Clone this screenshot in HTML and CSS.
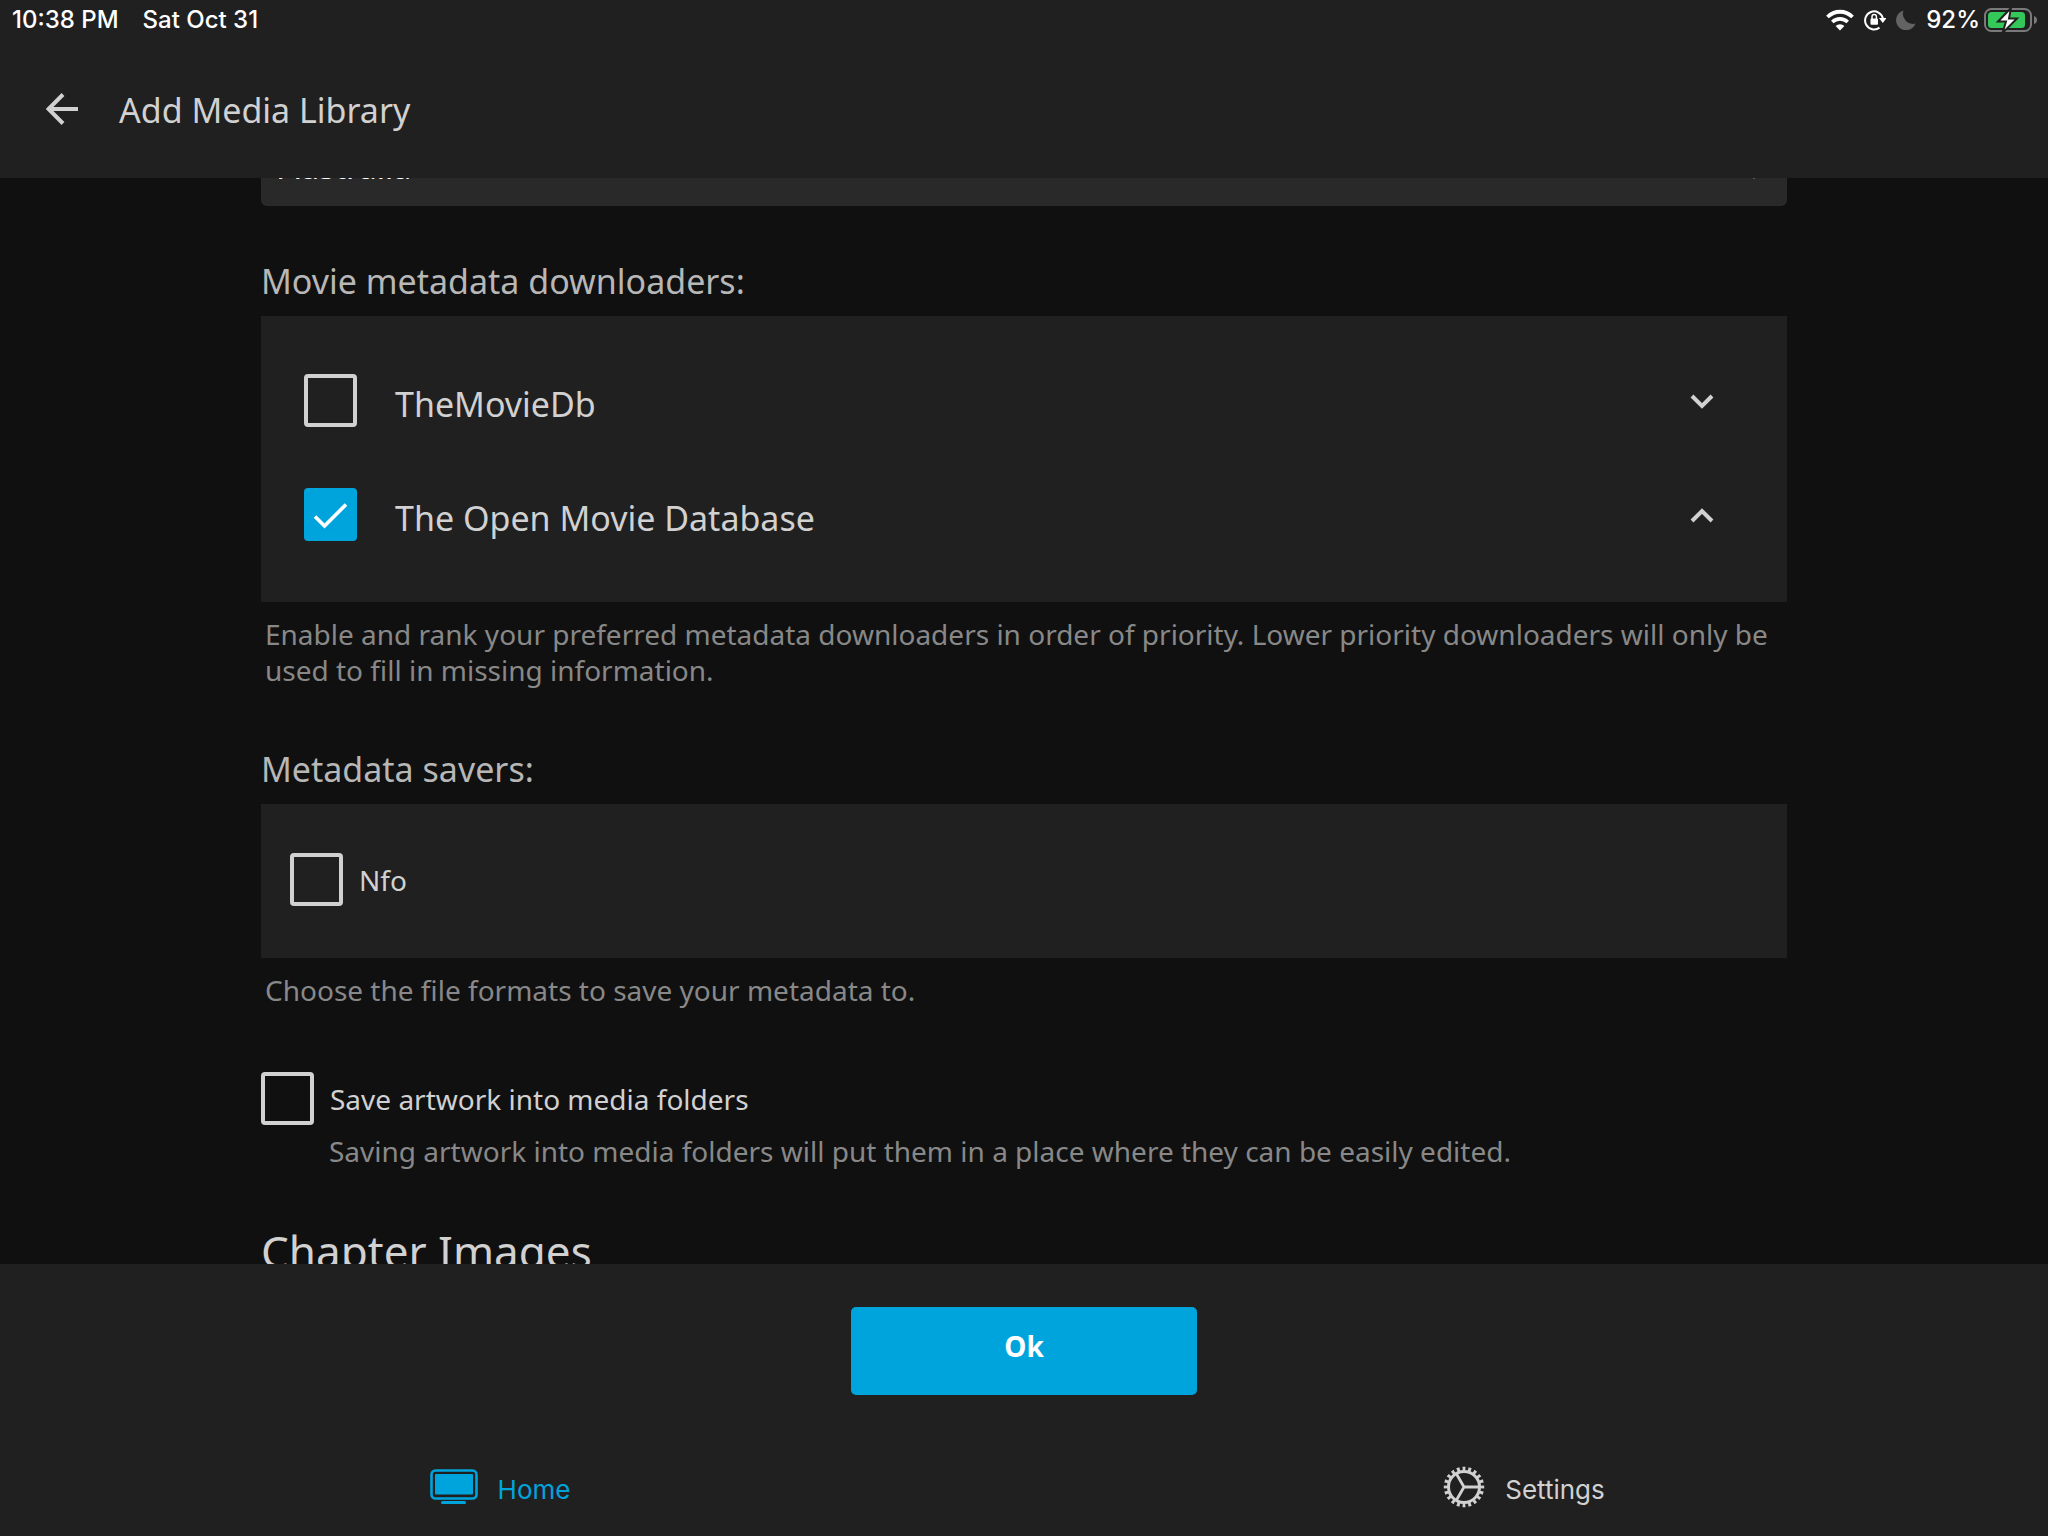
FILE: index.html
```html
<!DOCTYPE html>
<html lang="en">
<head>
<meta charset="utf-8">
<meta name="viewport" content="width=device-width, initial-scale=1">
<title>Add Media Library</title>
<link rel="stylesheet" href="styles.css">
</head>
<body>
<div class="app">
  <header class="top">
    <div class="status">
      <span>10:38 PM</span>
      <span>Sat Oct 31</span>
      <div class="status-icons">
        <svg width="28" height="22" viewBox="0 0 28 22" aria-label="Wi-Fi">
          <path d="M1.500 8A17.500 17.500 0 0 1 26.500 8" fill="none" stroke="#fff" stroke-width="3.800"/>
          <path d="M6.300 13A11 11 0 0 1 21.700 13" fill="none" stroke="#fff" stroke-width="3.600"/>
          <path d="M14 21.500l-4.400-4.500a6.300 6.300 0 0 1 8.800 0z" fill="#fff"/>
        </svg>
        <svg width="22" height="22" viewBox="0 0 22 22" aria-label="Rotation lock">
          <path d="M15.500 18.600A9 9 0 1 1 18.900 9.500" fill="none" stroke="#fff" stroke-width="2"/>
          <path d="M15 9h7.500l-3.700 5z" fill="#fff"/>
          <rect x="6.500" y="9.500" width="7.500" height="6.200" rx="1" fill="#fff"/>
          <path d="M8 10V7.800a2.200 2.200 0 0 1 4.400 0V10" fill="none" stroke="#fff" stroke-width="1.500"/>
        </svg>
        <svg width="20" height="20" viewBox="0 0 20 20" aria-label="Do not disturb">
          <path d="M7.500 0.500A10 10 0 1 0 19.500 13.500A10 10 0 0 1 7.500 0.500z" fill="#636363"/>
        </svg>
        <span>92%</span>
        <svg class="battery" width="54" height="26" viewBox="0 0 54 26" aria-label="Charging">
          <rect x="1" y="2" width="46" height="22" rx="6.500" fill="none" stroke="#7a7a7a" stroke-width="2"/>
          <path d="M50 9q3 1 3 4t-3 4z" fill="#7a7a7a"/>
          <rect x="4" y="5" width="37" height="16" rx="3.500" fill="#34c759"/>
          <path d="M27 1L14 14.500h8L18.500 26L33 11.500h-8z" fill="#fff" stroke="#202020" stroke-width="2"/>
        </svg>
      </div>
    </div>
    <div class="titlebar">
      <button class="icon-button" type="button" aria-label="Back">
        <svg width="32" height="32" viewBox="0 0 32 32"><path d="M32 16H3M17 1.500L2.500 16L17 30.500" fill="none" stroke="#d1d1d1" stroke-width="4"/></svg>
      </button>
      <h1>Add Media Library</h1>
    </div>
  </header>

  <main class="scroller">
    <form class="form" id="library">
      <div class="select-wrap">
        <select class="select" aria-label="Country">
          <option>Australia</option>
        </select>
        <svg class="select-arrow" width="24" height="16" viewBox="0 0 24 16"><path d="M2 2L12 12L22 2" fill="none" stroke="#d1d1d1" stroke-width="4"/></svg>
      </div>

      <section class="group">
        <h2>Movie metadata downloaders:</h2>
        <div class="panel ranked">
          <div class="rank-row">
            <label class="check"><input type="checkbox"><span>TheMovieDb</span></label>
            <button class="icon-button" type="button" aria-label="Move down">
              <svg width="24" height="18" viewBox="0 0 24 18"><path d="M2 5L12 15L22 5" fill="none" stroke="#d1d1d1" stroke-width="4"/></svg>
            </button>
          </div>
          <div class="rank-row">
            <label class="check"><input type="checkbox" checked><span>The Open Movie Database</span></label>
            <button class="icon-button" type="button" aria-label="Move up">
              <svg width="24" height="18" viewBox="0 0 24 18"><path d="M2 16L12 6L22 16" fill="none" stroke="#d1d1d1" stroke-width="4"/></svg>
            </button>
          </div>
        </div>
        <p class="help">Enable and rank your preferred metadata downloaders in order of priority. Lower priority downloaders will only be used to fill in missing information.</p>
      </section>

      <section class="group">
        <h2>Metadata savers:</h2>
        <div class="panel savers">
          <label class="check"><input type="checkbox"><span>Nfo</span></label>
        </div>
        <p class="help">Choose the file formats to save your metadata to.</p>
      </section>

      <section class="artwork">
        <label class="check"><input type="checkbox" aria-describedby="artwork-help"><span>Save artwork into media folders</span></label>
        <p class="help" id="artwork-help">Saving artwork into media folders will put them in a place where they can be easily edited.</p>
      </section>

      <h2 class="section-title">Chapter Images</h2>
    </form>
  </main>

  <footer class="bottom">
    <button class="submit" type="submit" form="library">Ok</button>
    <nav class="tabs">
      <a class="tab active" href="#home">
        <svg width="48" height="36" viewBox="0 0 48 36"><rect x="1.500" y="1.500" width="45" height="28" rx="4" fill="none" stroke="currentColor" stroke-width="2.600"/><rect x="5" y="5" width="38" height="20.500" rx="1" fill="currentColor"/><rect x="11" y="32" width="25" height="3" rx="1.500" fill="currentColor"/></svg>
        <span>Home</span>
      </a>
      <a class="tab" href="#settings">
        <svg width="42" height="42" viewBox="0 0 42 42" fill="none" stroke="currentColor">
          <circle cx="21" cy="21" r="15.500" stroke-width="3"/>
          <circle cx="21" cy="21" r="18.200" stroke-width="4" pathLength="40" stroke-dasharray="1 1" stroke-dashoffset="0.500"/>
          <path d="M21 21H36M21 21L13.500 8M21 21L13.500 34" stroke-width="2.800"/>
        </svg>
        <span>Settings</span>
      </a>
    </nav>
  </footer>
</div>
</body>
</html>
```
FILE: styles.css
```css
* { box-sizing: border-box; }

body {
  margin: 0;
  background: #101010;
  color: #d1d1d1;
  font-family: "Noto Sans", sans-serif;
}

h1, h2, p { margin: 0; font-weight: 400; }

.app {
  display: flex;
  flex-direction: column;
  height: 100vh;
}

.top, .bottom {
  flex: none;
  background: #202020;
}

.status {
  display: flex;
  align-items: center;
  gap: 24px;
  height: 40px;
  padding: 0 10px 0 12px;
  color: #fff;
  font: 500 24px/40px Inter, sans-serif;
}

.status-icons {
  display: flex;
  align-items: center;
  gap: 10px;
  margin-left: auto;
}

.battery { margin-left: -6px; }

.titlebar {
  display: flex;
  align-items: center;
  gap: 41px;
  height: 138px;
  padding: 0 46px;
}

h1, h2 { font-size: 34px; line-height: 46px; }

h1 { padding-top: 2px; }

.icon-button {
  display: flex;
  padding: 0;
  border: 0;
  background: none;
}

.scroller {
  flex: 1;
  min-height: 0;
  overflow: hidden;
}

/* The form is scrolled past its first fields. */
.form {
  margin-top: -52px;
  padding: 0 261px;
}

.select-wrap { position: relative; }

.select {
  display: block;
  width: 100%;
  height: 80px;
  padding: 2px 18px 0;
  appearance: none;
  border: 0;
  border-radius: 6px;
  background: #292929;
  color: #fff;
  font: 32px/46px "Noto Sans", sans-serif;
}

.select-arrow {
  position: absolute;
  top: 38px;
  right: 21px;
}

.group { margin-top: 52px; }
.group + .group { margin-top: 58px; }
.group h2 { color: #b7b7b7; }

.panel {
  margin: 12px 0 14px;
  background: #202020;
}

.ranked { padding: 27px 73px 31px 43px; }

.rank-row {
  display: flex;
  align-items: center;
  justify-content: space-between;
  height: 114px;
}

.rank-row .check { gap: 38px; font-size: 34px; }
.rank-row span { padding-top: 8px; }

.savers { padding: 49px 29px 52px; }

.check {
  display: flex;
  align-items: center;
  gap: 16px;
  font-size: 28px;
  line-height: 36px;
}

.check input {
  flex: none;
  width: 53px;
  height: 53px;
  margin: 0;
  appearance: none;
  border: 4px solid #d1d1d1;
  border-radius: 4px;
}

.check input:checked {
  border-color: #00a4dc;
  background: #00a4dc url("data:image/svg+xml,%3Csvg xmlns='http://www.w3.org/2000/svg' viewBox='0 0 53 53'%3E%3Cpath d='M11 28.500L20.500 38L42 16.500' fill='none' stroke='%23fff' stroke-width='3.600'/%3E%3C/svg%3E") center / 53px 53px no-repeat;
}

.help {
  padding: 0 4px;
  color: #888;
  font-size: 28px;
  line-height: 36px;
}

.artwork { margin-top: 64px; }
.artwork .help { padding: 8px 0 0 68px; }

.section-title {
  margin-top: 52px;
  font-size: 44px;
  line-height: 60px;
}

.bottom { padding-top: 43px; }

.submit {
  display: block;
  width: 346px;
  height: 88px;
  margin: 0 auto;
  padding: 0 0 10px;
  border: 0;
  border-radius: 5px;
  background: #00a4dc;
  color: #fff;
  font: 700 28px/38px "Noto Sans", sans-serif;
}

.tabs {
  display: flex;
  height: 98px;
  margin-top: 43px;
}

.tab {
  flex: 1;
  display: flex;
  align-items: center;
  justify-content: center;
  gap: 20px;
  padding-right: 24px;
  color: #d1d1d1;
  font: 26px/32px Inter, sans-serif;
  text-decoration: none;
}

.tab span { padding-top: 6px; }

.tab.active { color: #00a4dc; }
```
